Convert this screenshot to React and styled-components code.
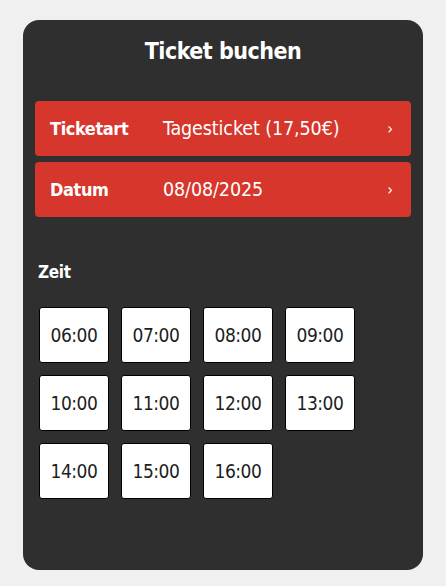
import React from "react";
import styled, { createGlobalStyle } from "styled-components";

const GlobalStyle = createGlobalStyle`
  body {
    margin: 0;
    background: #f0f0f0;
    font-family: "DejaVu Sans Condensed", "Liberation Sans", sans-serif;
  }
`;

const times = [
  "06:00", "07:00", "08:00", "09:00",
  "10:00", "11:00", "12:00", "13:00",
  "14:00", "15:00", "16:00",
];

const App = () => {
  return (
    <>
      <GlobalStyle />
      <Card>
        <Title>Ticket buchen</Title>
        <Rows>
          <Row>
            <Label>Ticketart</Label>
            <Value>Tagesticket (17,50€)</Value>
            <Chevron>›</Chevron>
          </Row>
          <Row>
            <Label>Datum</Label>
            <Value>08/08/2025</Value>
            <Chevron>›</Chevron>
          </Row>
        </Rows>
        <Section>
          <SectionTitle>Zeit</SectionTitle>
          <TimeGrid>
            {times.map((t) => (
              <TimeButton key={t}>{t}</TimeButton>
            ))}
          </TimeGrid>
        </Section>
      </Card>
    </>
  );
};

const Card = styled.div`
  box-sizing: border-box;
  width: 400px;
  height: 550px;
  margin: 20px 0 0 23px;
  padding: 0 12px;
  background: #2f2f2f;
  border-radius: 16px;
  color: #fff;
`;

const Title = styled.h1`
  margin: 0;
  height: 62px;
  line-height: 62px;
  text-align: center;
  font-size: 23px;
  font-weight: bold;
  letter-spacing: -0.5px;
`;

const Rows = styled.div`
  display: flex;
  flex-direction: column;
  gap: 6px;
  margin-top: 19px;
`;

const Row = styled.div`
  display: flex;
  align-items: center;
  height: 55px;
  padding: 0 18px 0 15px;
  background: #d6362b;
  border-radius: 4px;
`;

const Label = styled.span`
  width: 113px;
  font-size: 18px;
  font-weight: bold;
  letter-spacing: -0.4px;
`;

const Value = styled.span`
  flex: 1;
  font-size: 19.5px;
  letter-spacing: -0.1px;
`;

const Chevron = styled.span`
  font-size: 16px;
`;

const Section = styled.div`
  padding: 0 3px;
  margin-top: 40px;
`;

const SectionTitle = styled.div`
  font-size: 17px;
  font-weight: bold;
  height: 30px;
  line-height: 30px;
  letter-spacing: -0.3px;
`;

const TimeGrid = styled.div`
  display: grid;
  grid-template-columns: repeat(4, 70px);
  grid-auto-rows: 56px;
  gap: 12px;
  margin-top: 20px;
  padding-left: 1px;
`;

const TimeButton = styled.div`
  display: flex;
  align-items: center;
  justify-content: center;
  background: #fff;
  border: 1px solid #000;
  border-radius: 3px;
  color: #1e1e1e;
  font-size: 19px;
  letter-spacing: -0.5px;
`;

export default App;
